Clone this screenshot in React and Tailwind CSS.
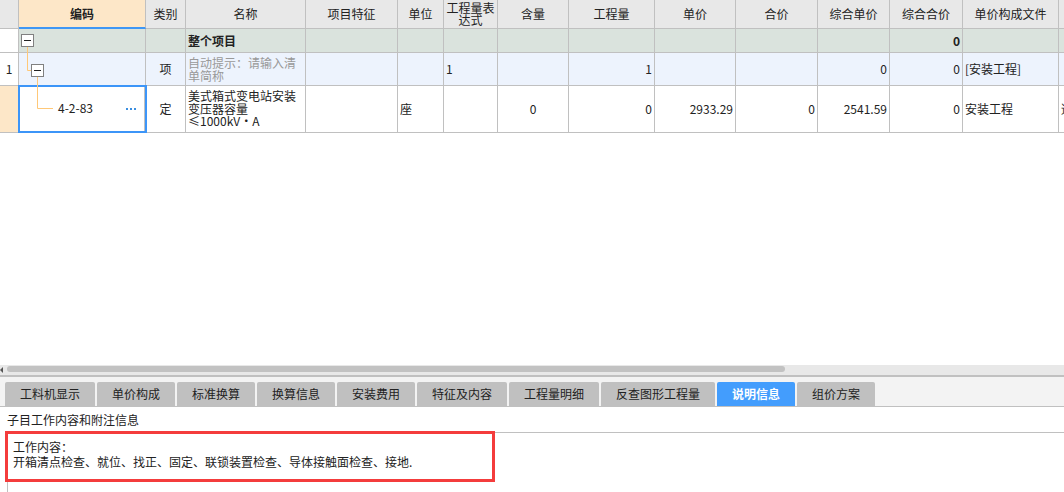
import React from 'react'

const W = ['w-[19px]', 'w-[127px]', 'w-[40px]', 'w-[120px]', 'w-[92px]', 'w-[46px]', 'w-[54px]', 'w-[71px]', 'w-[86px]', 'w-[81px]', 'w-[82px]', 'w-[72px]', 'w-[73px]', 'w-[96px]', 'w-[60px]']

const headers = ['', '编码', '类别', '名称', '项目特征', '单位', '工程量表达式', '含量', '工程量', '单价', '合价', '综合单价', '综合合价', '单价构成文件', '']

const tabs = [
  ['工料机显示', 'w-[90px]'],
  ['单价构成', 'w-[78px]'],
  ['标准换算', 'w-[78px]'],
  ['换算信息', 'w-[78px]'],
  ['安装费用', 'w-[78px]'],
  ['特征及内容', 'w-[90px]'],
  ['工程量明细', 'w-[90px]'],
  ['反查图形工程量', 'w-[114px]'],
  ['说明信息', 'w-[78px]'],
  ['组价方案', 'w-[78px]'],
]

function Cell({ i, className = '', children }) {
  return (
    <div className={`${W[i]} shrink-0 h-full border-r border-b border-[#c0c0c0] flex items-center px-[2px] overflow-hidden ${className}`}>
      {children}
    </div>
  )
}

function HeaderRow() {
  return (
    <div className="flex h-[29px] bg-[#e8e8e8] text-[#222]">
      {headers.map((h, i) => (
        <Cell
          key={i}
          i={i}
          className={`justify-center text-center ${i === 1 ? 'bg-[#fde7c8] font-bold border-b-2 border-b-[#3f97f5]' : ''}`}
        >
          {i === 6 ? (
            <span className="leading-[12px] -mt-[1px]">工程量表<br />达式</span>
          ) : (
            h
          )}
        </Cell>
      ))}
    </div>
  )
}

function TreeLines() {
  return (
    <svg className="absolute left-0 top-0 pointer-events-none" width="60" height="132">
      <g stroke="#ffc878" strokeWidth="1" fill="none">
        <path d="M27.5 47 V70.5 H31" />
        <path d="M37.5 77 V108.5 H53" />
      </g>
      <rect x="21.5" y="34.5" width="12" height="12" fill="#fff" stroke="#808080" />
      <path d="M24 40.5 H31" stroke="#222" />
      <rect x="31.5" y="64.5" width="12" height="12" fill="#fff" stroke="#808080" />
      <path d="M34 70.5 H41" stroke="#222" />
    </svg>
  )
}

function Grid() {
  return (
    <div className="relative h-[365px] overflow-hidden bg-white text-[12px]">
      <div className="w-[1200px]">
        <HeaderRow />

        <div className="flex h-[24px] bg-[#dae3dd]">
          <Cell i={0} className="bg-white" />
          <Cell i={1} />
          <Cell i={2} />
          <Cell i={3} className="font-bold text-[#222]">整个项目</Cell>
          <Cell i={4} />
          <Cell i={5} />
          <Cell i={6} />
          <Cell i={7} />
          <Cell i={8} />
          <Cell i={9} />
          <Cell i={10} />
          <Cell i={11} />
          <Cell i={12} className="justify-end font-bold">0</Cell>
          <Cell i={13} />
          <Cell i={14} />
        </div>

        <div className="flex h-[33px] bg-[#edf3fd] text-[#222]">
          <Cell i={0} className="bg-white justify-center">1</Cell>
          <Cell i={1} />
          <Cell i={2} className="justify-center">项</Cell>
          <Cell i={3} className="text-[#999] leading-[13px]">自动提示：请输入清单简称</Cell>
          <Cell i={4} />
          <Cell i={5} />
          <Cell i={6}>1</Cell>
          <Cell i={7} />
          <Cell i={8} className="justify-end">1</Cell>
          <Cell i={9} />
          <Cell i={10} />
          <Cell i={11} className="justify-end">0</Cell>
          <Cell i={12} className="justify-end">0</Cell>
          <Cell i={13}>[安装工程]</Cell>
          <Cell i={14} />
        </div>

        <div className="flex h-[47px] bg-white text-[#222]">
          <Cell i={0} className="bg-[#fde7c8]" />
          <div className="w-[127px] shrink-0 h-full border-r border-b border-[#c0c0c0] relative -ml-[1px] -mt-[1px]">
            <div className="absolute inset-0 border-2 border-[#3c95f8] h-[48px] w-[129px]" />
            <div className="absolute left-[40px] top-0 h-full flex items-center">4-2-83</div>
            <div className="absolute left-[108px] top-[23px] flex gap-[2px]">
              <span className="w-[2px] h-[2px] bg-[#3a8ee0]" />
              <span className="w-[2px] h-[2px] bg-[#3a8ee0]" />
              <span className="w-[2px] h-[2px] bg-[#3a8ee0]" />
            </div>
          </div>
          <div className="w-[1px] shrink-0" />
          <Cell i={2} className="justify-center">定</Cell>
          <Cell i={3} className="leading-[12.5px]">美式箱式变电站安装变压器容量≤1000kV·A</Cell>
          <Cell i={4} />
          <Cell i={5}>座</Cell>
          <Cell i={6} />
          <Cell i={7} className="justify-center">0</Cell>
          <Cell i={8} className="justify-end">0</Cell>
          <Cell i={9} className="justify-end">2933.29</Cell>
          <Cell i={10} className="justify-end">0</Cell>
          <Cell i={11} className="justify-end">2541.59</Cell>
          <Cell i={12} className="justify-end">0</Cell>
          <Cell i={13}>安装工程</Cell>
          <Cell i={14}>适用</Cell>
        </div>
      </div>
      <TreeLines />
    </div>
  )
}

export default function App() {
  return (
    <div className="w-[1064px] h-[492px] overflow-hidden bg-white text-[#222] font-['Noto_Sans_CJK_SC','Noto_Sans',sans-serif] text-[12px]">
      <Grid />

      <div className="h-[10px] bg-[#e8e8e8] relative">
        <div className="absolute left-0 top-[2px] w-0 h-0 border-y-[3px] border-y-transparent border-r-[3px] border-r-[#555]" />
        <div className="absolute left-[7px] top-[1px] w-[778px] h-[6px] rounded-full bg-[#c2c2c2]" />
      </div>
      <div className="h-[2px] bg-[#c0c0c0]" />

      <div className="h-[30px] bg-[#f3f3f3] border-b border-[#c0c0c0] pt-[5px] pl-[5px] flex gap-[2px]">
        {tabs.map(([t, w]) => {
          const active = t === '说明信息'
          return (
            <div
              key={t}
              className={`${w} h-[24px] shrink-0 rounded-t-[2px] flex items-center justify-center text-[12px] ${active ? 'bg-[#439dfd] text-white font-bold' : 'bg-[#c0c0c0] text-[#222]'}`}
            >
              {t}
            </div>
          )
        })}
      </div>

      <div className="relative">
        <div className="h-[25px] pl-[7px] flex items-center">子目工作内容和附注信息</div>
        <div className="ml-[7px] h-[60px] border-t border-l border-[#c0c0c0] pl-[5px] pt-[6px] leading-[15px]">
          <div>工作内容：</div>
          <div>开箱清点检查、就位、找正、固定、联锁装置检查、导体接触面检查、接地.</div>
        </div>
        <div className="absolute left-[5px] top-[24px] w-[490px] h-[51px] border-[3px] border-[#f43c3c]" />
      </div>
    </div>
  )
}
